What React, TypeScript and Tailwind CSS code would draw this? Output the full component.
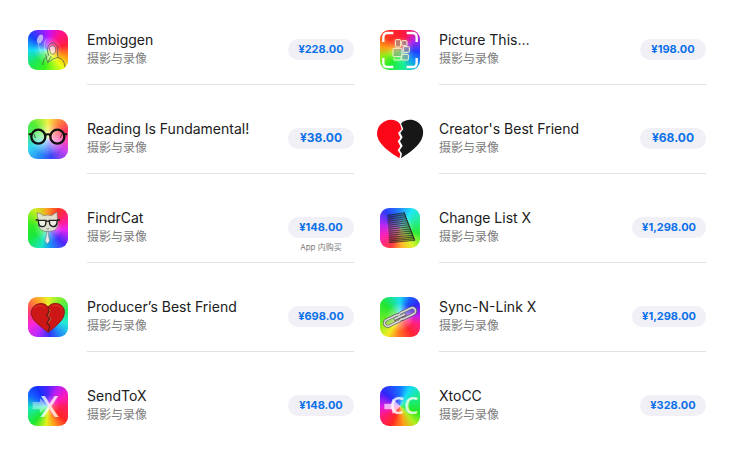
import { ReactNode } from 'react'
import clsx from 'clsx'

type StoreApp = {
  name: string
  price: string
  icon: ReactNode
  tile?: string
  hasInAppPurchases?: boolean
}

function EmbiggenArt() {
  return (
    <>
      <ellipse cx="36" cy="27" rx="8" ry="14" transform="rotate(25 36 27)" fill="#fff" opacity="0.6" />
      <path d="M31 39 C31 52 36 63 44 70 M55 28 C46 40 49 57 54 72" stroke="#fff" strokeWidth="3" opacity="0.35" />
      <path d="M44 105 C46 87 52 81 63 76 C56 65 57 44 70 39 C86 36 93 52 88 69 L91 83 C105 87 109 96 111 111" stroke="#444" strokeWidth="2" />
      <path d="M64 53 C70 44 81 45 83 57 C84 69 75 77 67 69 Z" fill="#fff" fillOpacity="0.6" stroke="#555" strokeWidth="2" />
      <path d="M53 72 L59 98 L69 78 M59 98 L75 87 L90 82" fill="#fff" fillOpacity="0.35" stroke="#555" strokeWidth="2" />
    </>
  )
}

function PictureThisArt() {
  return (
    <>
      <path
        d="M10 36 V22 Q10 9 23 9 H40 M80 9 H97 Q110 9 110 22 V36 M10 84 V98 Q10 111 23 111 H40 M80 111 H97 Q110 111 110 98 V84"
        stroke="#fff"
        strokeWidth="7"
      />
      <g fill="#8a9a92" fillOpacity="0.55" stroke="#f5f4cf" strokeWidth="3">
        <rect x="46" y="29" width="16" height="22" rx="2" />
        <rect x="65" y="32" width="16" height="15" rx="2" />
        <rect x="70" y="50" width="18" height="17" rx="2" />
        <rect x="39" y="55" width="27" height="25" rx="2" />
        <rect x="65" y="73" width="20" height="17" rx="2" />
      </g>
      <path d="M42 84 V90 H63 V84" stroke="#e8ffd0" strokeWidth="3" />
    </>
  )
}

function GlassesArt() {
  return (
    <>
      <g fill="#fff" fillOpacity="0.15" stroke="#111" strokeWidth="7">
        <circle cx="31" cy="53" r="21" />
        <circle cx="88" cy="53" r="21" />
      </g>
      <path d="M51 49 Q60 42 68 49 M2 46 H12 M107 46 H117" stroke="#111" strokeWidth="6" />
      <path d="M18 45 L22 57 M102 45 L97 57" stroke="#111" strokeWidth="3" opacity="0.6" />
    </>
  )
}

function BrokenHeartArt() {
  return (
    <>
      <path
        d="M60 15 C50 2 33 0 18 5 C-2 13 -12 32 -8 52 C-3 78 31 101 58 118 L61 105 L53 94 L61 82 L53 67 L61 56 L54 42 L65 31 Z"
        fill="#fb0718"
      />
      <path
        d="M63 14 C74 1 94 0 107 6 C126 14 133 34 128 52 C121 80 89 101 63 118 L66 104 L59 94 L68 81 L60 67 L68 55 L61 42 L70 30 Z"
        fill="#171717"
      />
    </>
  )
}

function FindrCatArt() {
  return (
    <>
      <path
        d="M31 41 L27 14 Q39 15 47 23 Q59 19 70 23 L87 12 L89 42 Q92 66 69 70 H50 Q29 65 31 41 Z"
        fill="#dfe3d3"
        fillOpacity="0.95"
        stroke="#777"
        strokeWidth="2"
      />
      <g fill="#fff" fillOpacity="0.45" stroke="#222" strokeWidth="4">
        <path d="M31 37 H54 L53 49 Q51 56 42 56 Q33 55 32 47 Z" />
        <path d="M64 37 H88 L86 48 Q84 56 75 56 Q66 54 65 47 Z" />
      </g>
      <path d="M54 41 Q59 38 64 41 M23 36 H32 M87 36 H96" stroke="#222" strokeWidth="4" />
      <path d="M55 60 L59 64 L63 60" stroke="#555" strokeWidth="2" />
      <path d="M55 72 H63 L61 79 L65 99 L58 108 L51 99 L56 79 Z" fill="#e3eef2" stroke="#718083" strokeWidth="2" />
    </>
  )
}

function ChangeListArt() {
  return (
    <>
      <path d="M22 21 L74 14 L105 97 L27 105 Z" fill="#222" opacity="0.3" />
      <path
        d="M22 22 L74 14 M22 28 L76 20 M23 34 L78 26 M23 40 L80 32 M24 46 L82 38 M24 52 L85 44 M25 58 L87 50 M25 64 L90 56 M26 70 L92 63 M26 76 L94 69 M27 82 L97 75 M27 88 L99 82 M28 94 L101 87 M28 99 L103 92 M28 104 L105 97"
        stroke="#222"
        strokeWidth="2"
      />
      <path d="M72 14 L104 97" stroke="#222" strokeWidth="3" />
    </>
  )
}

function RedHeartArt() {
  return (
    <>
      <path
        d="M60 30 C50 16 29 17 17 29 C4 43 10 64 27 79 Q42 92 60 106 Q79 93 95 76 C111 59 114 38 101 26 C88 15 69 18 60 30 Z"
        fill="#cd1716"
        stroke="#8c1916"
        strokeWidth="3"
      />
      <path d="M18 35 Q31 18 50 31 M73 28 Q89 19 103 36" stroke="#f04731" strokeWidth="3" opacity="0.6" />
      <path d="M60 31 L64 43 L56 55 L65 65 L57 78 L65 88 L60 104" stroke="#651b15" strokeWidth="4" />
      <path d="M63 35 L67 44 L60 55 L69 65 L61 78" stroke="#b98443" strokeWidth="2" />
    </>
  )
}

function ChainLinkArt() {
  return (
    <g transform="rotate(-26 60 60)">
      <g stroke="#555" strokeWidth="9">
        <rect x="9" y="50" width="53" height="20" rx="10" />
        <rect x="58" y="50" width="53" height="20" rx="10" />
      </g>
      <g fill="#aaa" fillOpacity="0.3" stroke="#d6d6d6" strokeWidth="5">
        <rect x="9" y="50" width="53" height="20" rx="10" />
        <rect x="58" y="50" width="53" height="20" rx="10" />
      </g>
      <path d="M40 60 H80" stroke="#555" strokeWidth="9" />
      <path d="M42 59 H78" stroke="#ddd" strokeWidth="5" />
    </g>
  )
}

function SendToXArt() {
  return (
    <>
      <path d="M14 48 H36 V37 L61 60 L36 82 V70 H14 Z" fill="#fff" opacity="0.4" />
      <text x="65" y="92" textAnchor="middle" fontSize="84" fontWeight="500" fill="#fff" fillOpacity="0.8">
        X
      </text>
    </>
  )
}

function XtoCCArt() {
  return (
    <>
      <path d="M13 53 H37 V38 L62 61 L37 84 V70 H13 Z" fill="#fff" opacity="0.65" />
      <text
        x="72"
        y="85"
        textAnchor="middle"
        fontSize="68"
        fontWeight="600"
        fill="#fff"
        fillOpacity="0.8"
        className="font-['Open_Sans',sans-serif]"
      >
        CC
      </text>
    </>
  )
}

const apps: StoreApp[] = [
  {
    name: 'Embiggen',
    price: '¥228.00',
    icon: <EmbiggenArt />,
    tile: 'bg-[radial-gradient(circle,#ffffff99,#ffffff00_50%),conic-gradient(#bd12ff,#ff1093_35deg,#ff213b_75deg,#ff9b16_110deg,#eaff16_140deg,#39f31b_190deg,#1de75b_230deg,#12dcf5_270deg,#1740fa_310deg,#bd12ff)]',
  },
  {
    name: 'Picture This…',
    price: '¥198.00',
    icon: <PictureThisArt />,
    tile: 'bg-[radial-gradient(circle,#ffff8088,#ffffff00_50%),conic-gradient(#ff1b31,#f91555_25deg,#b624e8_55deg,#213dff_95deg,#139df4_130deg,#18ed9c_165deg,#21ec2c_215deg,#92ed19_250deg,#ff9d16_280deg,#ff3522_315deg,#ff1b31)]',
  },
  {
    name: 'Reading Is Fundamental!',
    price: '¥38.00',
    icon: <GlassesArt />,
    tile: 'bg-[radial-gradient(circle,#ffffffbb,#ffffff00_60%),conic-gradient(#f3ef43,#ff803e_35deg,#ff365b_65deg,#ff48b1_95deg,#c742ee_125deg,#3649f5_170deg,#278bf7_205deg,#35d9ef_245deg,#46e978_280deg,#50ed38_315deg,#f3ef43)]',
  },
  { name: "Creator's Best Friend", price: '¥68.00', icon: <BrokenHeartArt /> },
  {
    name: 'FindrCat',
    price: '¥148.00',
    icon: <FindrCatArt />,
    hasInAppPurchases: true,
    tile: 'bg-[radial-gradient(circle,#ffffff99,#ffffff00_50%),conic-gradient(#ff9824,#ff3326_30deg,#ff1d87_65deg,#ed24ef_95deg,#4c28fa_135deg,#159bf6_175deg,#1de5c4_200deg,#18e83d_240deg,#31ec24_280deg,#caef22_325deg,#ff9824)]',
  },
  {
    name: 'Change List X',
    price: '¥1,298.00',
    icon: <ChangeListArt />,
    tile: 'bg-[radial-gradient(circle,#ffffff99,#ffffff00_50%),conic-gradient(#228afa,#21e7f4_35deg,#26ed91_70deg,#27eb3c_105deg,#dff429_145deg,#ffb52b_175deg,#ff3a3f_205deg,#fb23b6_245deg,#b927f2_280deg,#293dfa_320deg,#228afa)]',
  },
  {
    name: 'Producer’s Best Friend',
    price: '¥698.00',
    icon: <RedHeartArt />,
    tile: 'bg-[radial-gradient(circle,#ffffff66,#ffffff00_50%),conic-gradient(#e9f128,#70ed31_40deg,#23ee6b_75deg,#24e8dd_110deg,#218ef5_145deg,#3532fa_175deg,#b52aff_210deg,#fa26db_245deg,#ff3869_285deg,#ff9b28_325deg,#e9f128)]',
  },
  {
    name: 'Sync-N-Link X',
    price: '¥1,298.00',
    icon: <ChainLinkArt />,
    tile: 'bg-[radial-gradient(circle,#ffffffaa,#ffffff00_50%),conic-gradient(#18ddf0,#1958fa_30deg,#3325f5_55deg,#bd20ed_85deg,#ff2088_110deg,#ff2330_145deg,#ff7c22_185deg,#f2ed22_215deg,#74ed23_255deg,#20e635_310deg,#18ddf0)]',
  },
  {
    name: 'SendToX',
    price: '¥148.00',
    icon: <SendToXArt />,
    tile: 'bg-[radial-gradient(circle,#ffffff66,#ffffff00_40%),conic-gradient(#5023fa,#bf1df3_30deg,#fa19bd_60deg,#ff2056_95deg,#ff2526_130deg,#ff991d_160deg,#e5f21b_185deg,#1ee92d_220deg,#17e9bc_265deg,#1464ff_300deg,#162fff_330deg,#5023fa)]',
  },
  {
    name: 'XtoCC',
    price: '¥328.00',
    icon: <XtoCCArt />,
    tile: 'bg-[radial-gradient(circle,#ffffff44,#ffffff00_40%),conic-gradient(#1675ff,#17dcf4_30deg,#18ed86_65deg,#23e724_110deg,#b4ee1d_140deg,#ff9b1b_170deg,#ff2722_205deg,#ff1a78_240deg,#dc19eb_270deg,#3025fa_310deg,#1675ff)]',
  },
]

function AppIcon({ tile, children }: { tile?: string; children: ReactNode }) {
  return (
    <div className={clsx('mt-[15px] size-10 shrink-0 rounded-[9px]', tile)}>
      <svg viewBox="0 0 120 120" fill="none" aria-hidden="true" className="size-full overflow-visible">
        {children}
      </svg>
    </div>
  )
}

function AppRow({ app, divider }: { app: StoreApp; divider: boolean }) {
  return (
    <li className="flex min-w-0 gap-[19px]">
      <AppIcon tile={app.tile}>{app.icon}</AppIcon>
      <div
        className={clsx(
          'flex min-h-[70px] min-w-0 flex-1 justify-between gap-2 border-b',
          divider ? 'border-[#e2e2e2]' : 'border-transparent',
        )}
      >
        <div className="min-w-0 pt-[15px]">
          <h3 className="truncate text-sm leading-5 text-[#202020]">{app.name}</h3>
          <p className="text-xs leading-[18px] text-[#7c7c7c]">摄影与录像</p>
        </div>
        <div className="flex shrink-0 flex-col items-center pt-6">
          {/* short prices are set one step larger */}
          <button
            type="button"
            className={clsx(
              'flex h-[21px] min-w-[66px] items-start justify-center rounded-full bg-[#f0f0f6] px-[10px] leading-5 font-bold text-[#0c70e8]',
              app.price.length < 7 ? 'text-[12px]' : 'text-[11px]',
            )}
          >
            {app.price}
          </button>
          {app.hasInAppPurchases && <span className="mt-[3px] text-[8px] leading-3 text-[#7c7c7c]">App 内购买</span>}
        </div>
      </div>
    </li>
  )
}

export default function App() {
  return (
    <main className="bg-white font-['Inter','Noto_Sans_CJK_SC',sans-serif]">
      <ul className="grid grid-cols-2 gap-x-[26px] gap-y-[19px] pt-[15px] pr-9 pb-4 pl-7">
        {apps.map((app, index) => (
          <AppRow key={app.name} app={app} divider={index < apps.length - 2} />
        ))}
      </ul>
    </main>
  )
}
